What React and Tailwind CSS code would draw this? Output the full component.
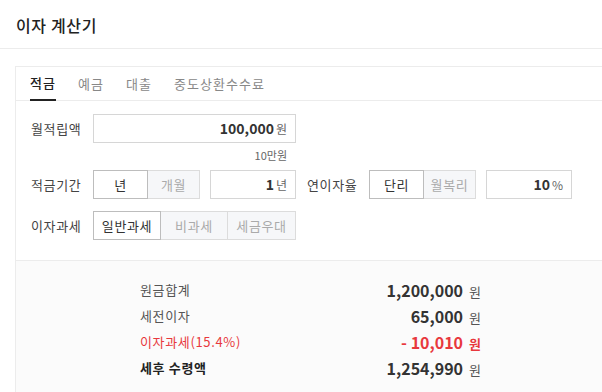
import React from 'react';

const font = { fontFamily: '"Noto Sans CJK KR", "Noto Sans", sans-serif' };

const tabs = ['적금', '예금', '대출', '중도상환수수료'];

const Toggle = ({ items, active = 0, widths }) => (
  <div className="flex h-[29px]">
    {items.map((item, i) => (
      <div
        key={item}
        className={`flex items-center justify-center text-[13px] tracking-[0.05em] border ${widths[i]} ${
          i === active
            ? 'bg-white border-[#bdbdbd] text-[#333] z-10'
            : 'bg-[#f6f7f9] border-[#dcdcdc] text-[#aaa]'
        } ${i > 0 ? '-ml-px' : ''}`}
      >
        {item}
      </div>
    ))}
  </div>
);

const NumberBox = ({ value, unit, className }) => (
  <div
    className={`h-[29px] border border-[#d6d6d6] bg-white flex items-center justify-end pr-[8px] ${className}`}
  >
    <span className="text-[14px] font-bold text-[#333]">{value}</span>
    <span className="text-[12px] text-[#666] ml-[2px]">{unit}</span>
  </div>
);

const SummaryRow = ({ label, value, tone = 'normal' }) => {
  const labelClass =
    tone === 'red'
      ? 'text-[#e8383d]'
      : tone === 'bold'
        ? 'text-[#222] font-bold'
        : 'text-[#555]';
  const valueClass = tone === 'red' ? 'text-[#e8383d]' : 'text-[#333]';
  return (
    <div className="flex items-center justify-between h-[26px]">
      <span className={`text-[13px] tracking-[0.05em] ${labelClass}`}>{label}</span>
      <span className="flex items-baseline">
        <span className={`text-[16px] font-bold ${valueClass}`}>{value}</span>
        <span className={`text-[13px] ml-[6px] ${tone === 'red' ? 'text-[#e8383d] font-bold' : 'text-[#555]'}`}>
          원
        </span>
      </span>
    </div>
  );
};

const Label = ({ children, className = '' }) => (
  <span className={`w-[62px] text-[13px] tracking-[0.05em] text-[#444] ${className}`}>{children}</span>
);

const App = () => {
  return (
    <div className="w-[602px] h-[392px] overflow-hidden bg-white" style={font}>
      <header className="h-[49px] border-b border-[#ececec] flex items-center pl-[16px]">
        <h1 className="text-[16px] font-medium tracking-[0.04em] text-[#222] mt-[2px]">이자 계산기</h1>
      </header>

      <div className="pt-[17px] pl-[15px]">
        <div className="w-[592px] border border-[#ececec]">
          <nav className="flex gap-[22px] pl-[14px] h-[34px] border-b border-[#ececec]">
            {tabs.map((tab, i) => (
              <div
                key={tab}
                className={`flex items-center text-[13px] tracking-[0.08em] ${
                  i === 0
                    ? 'text-[#222] font-medium border-b-2 border-[#222] -mb-px'
                    : 'text-[#888]'
                }`}
              >
                {tab}
              </div>
            ))}
          </nav>

          <div className="pl-[15px] pt-[13px] pb-[20px]">
            <div className="flex items-center">
              <Label>월적립액</Label>
              <NumberBox value="100,000" unit="원" className="w-[203px]" />
            </div>
            <div className="w-[265px] text-right pr-[9px] text-[11px] text-[#666] h-[27px] leading-[24px]">
              10만원
            </div>

            <div className="flex items-center">
              <Label>적금기간</Label>
              <Toggle items={['년', '개월']} widths={['w-[55px]', 'w-[53px]']} />
              <NumberBox value="1" unit="년" className="w-[86px] ml-[10px]" />
              <Label className="ml-[11px]">연이자율</Label>
              <Toggle items={['단리', '월복리']} widths={['w-[55px]', 'w-[53px]']} />
              <NumberBox value="10" unit="%" className="w-[86px] ml-[10px]" />
            </div>

            <div className="flex items-center mt-[12px]">
              <Label>이자과세</Label>
              <Toggle
                items={['일반과세', '비과세', '세금우대']}
                widths={['w-[68px]', 'w-[68px]', 'w-[69px]']}
              />
            </div>
          </div>

          <div className="border-t border-[#ececec] bg-[#fbfbfb] pt-[16px] pb-[20px]">
            <div className="ml-[124px] w-[341px]">
              <SummaryRow label="원금합계" value="1,200,000" />
              <SummaryRow label="세전이자" value="65,000" />
              <SummaryRow label="이자과세(15.4%)" value="- 10,010" tone="red" />
              <SummaryRow label="세후 수령액" value="1,254,990" tone="bold" />
            </div>
          </div>
        </div>
      </div>
    </div>
  );
};

export default App;
